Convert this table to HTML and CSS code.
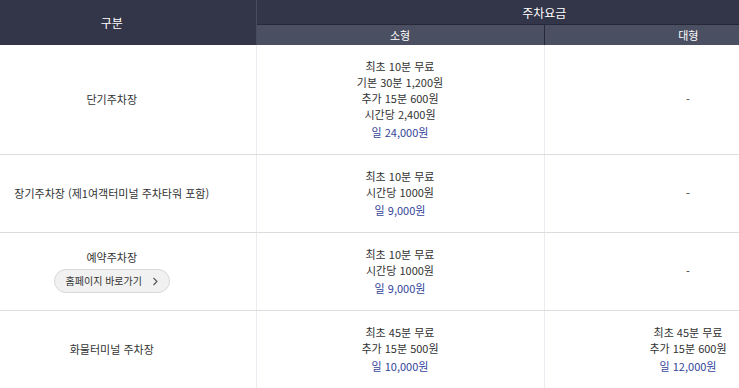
FILE: index.html
```html
<!DOCTYPE html>
<html lang="ko">
<head>
<meta charset="utf-8">
<link rel="stylesheet" href="styles.css">
</head>
<body>
<table class="fee">
  <colgroup>
    <col class="c1"><col class="c2"><col class="c3">
  </colgroup>
  <thead>
    <tr class="h1">
      <th rowspan="2" class="gubun">구분</th>
      <th colspan="2" class="top">주차요금</th>
    </tr>
    <tr class="h2">
      <th class="sub small">소형</th>
      <th class="sub">대형</th>
    </tr>
  </thead>
  <tbody>
    <tr>
      <td class="name">단기주차장</td>
      <td><p>최초 10분 무료<br>기본 30분 1,200원<br>추가 15분 600원<br>시간당 2,400원</p><p class="day">일 24,000원</p></td>
      <td>-</td>
    </tr>
    <tr>
      <td class="name">장기주차장 (제1여객터미널 주차타워 포함)</td>
      <td><p>최초 10분 무료<br>시간당 1000원</p><p class="day">일 9,000원</p></td>
      <td>-</td>
    </tr>
    <tr>
      <td class="name"><p>예약주차장</p><a class="btn" href="#">홈페이지 바로가기<span class="chev"><svg width="7" height="9" viewBox="0 0 7 9"><path d="M1.5 1 L5 4.5 L1.5 8" fill="none" stroke="#555" stroke-width="1.1"/></svg></span></a></td>
      <td><p>최초 10분 무료<br>시간당 1000원</p><p class="day">일 9,000원</p></td>
      <td>-</td>
    </tr>
    <tr>
      <td class="name">화물터미널 주차장</td>
      <td><p>최초 45분 무료<br>추가 15분 500원</p><p class="day">일 10,000원</p></td>
      <td><p>최초 45분 무료<br>추가 15분 600원</p><p class="day">일 12,000원</p></td>
    </tr>
  </tbody>
</table>
</body>
</html>
```

FILE: styles.css
```css
html, body {
  margin: 0;
  padding: 0;
  background: #fff;
  overflow: hidden;
}
body {
  font-family: "Noto Sans CJK KR", "Noto Sans", sans-serif;
  font-size: 11px;
  color: #333;
}
.fee {
  width: 832px;
  table-layout: fixed;
  border-collapse: collapse;
}
.c1 { width: 256px; }
.c2 { width: 288px; }
.c3 { width: 288px; }
.fee th {
  font-weight: normal;
  color: #fff;
  padding: 0;
  text-align: center;
}
.h1 th {
  background: #333649;
  height: 24px;
  font-size: 12px;
}
.fee th.gubun {
  border-right: 1px solid #474b5e;
  padding-right: 32px;
}
.top {
  border-bottom: 1px solid #262838;
}
.sub {
  background: #4b4f62;
  height: 20px;
  font-size: 11px;
  font-weight: bold;
}
.sub.small {
  border-right: 1px solid #262838;
}
.fee td {
  text-align: center;
  vertical-align: middle;
  padding: 13px 10px 14px;
  line-height: 16px;
  border-bottom: 1px solid #dcdcdc;
  border-right: 1px solid #ebebf2;
}
.fee td.name {
  padding-left: 0;
  padding-right: 32px;
}
.fee p {
  margin: 0;
}
.fee p.day {
  margin-top: 2px;
  color: #33449a;
}
.btn {
  display: inline-flex;
  align-items: center;
  gap: 10px;
  margin-top: 4px;
  height: 22px;
  padding: 0 10px 0 11px;
  border: 1px solid #d8d8d8;
  border-radius: 12px;
  background: #f1f1f1;
  color: #333;
  text-decoration: none;
  font-size: 10px;
}
.chev {
  display: inline-flex;
}
```
